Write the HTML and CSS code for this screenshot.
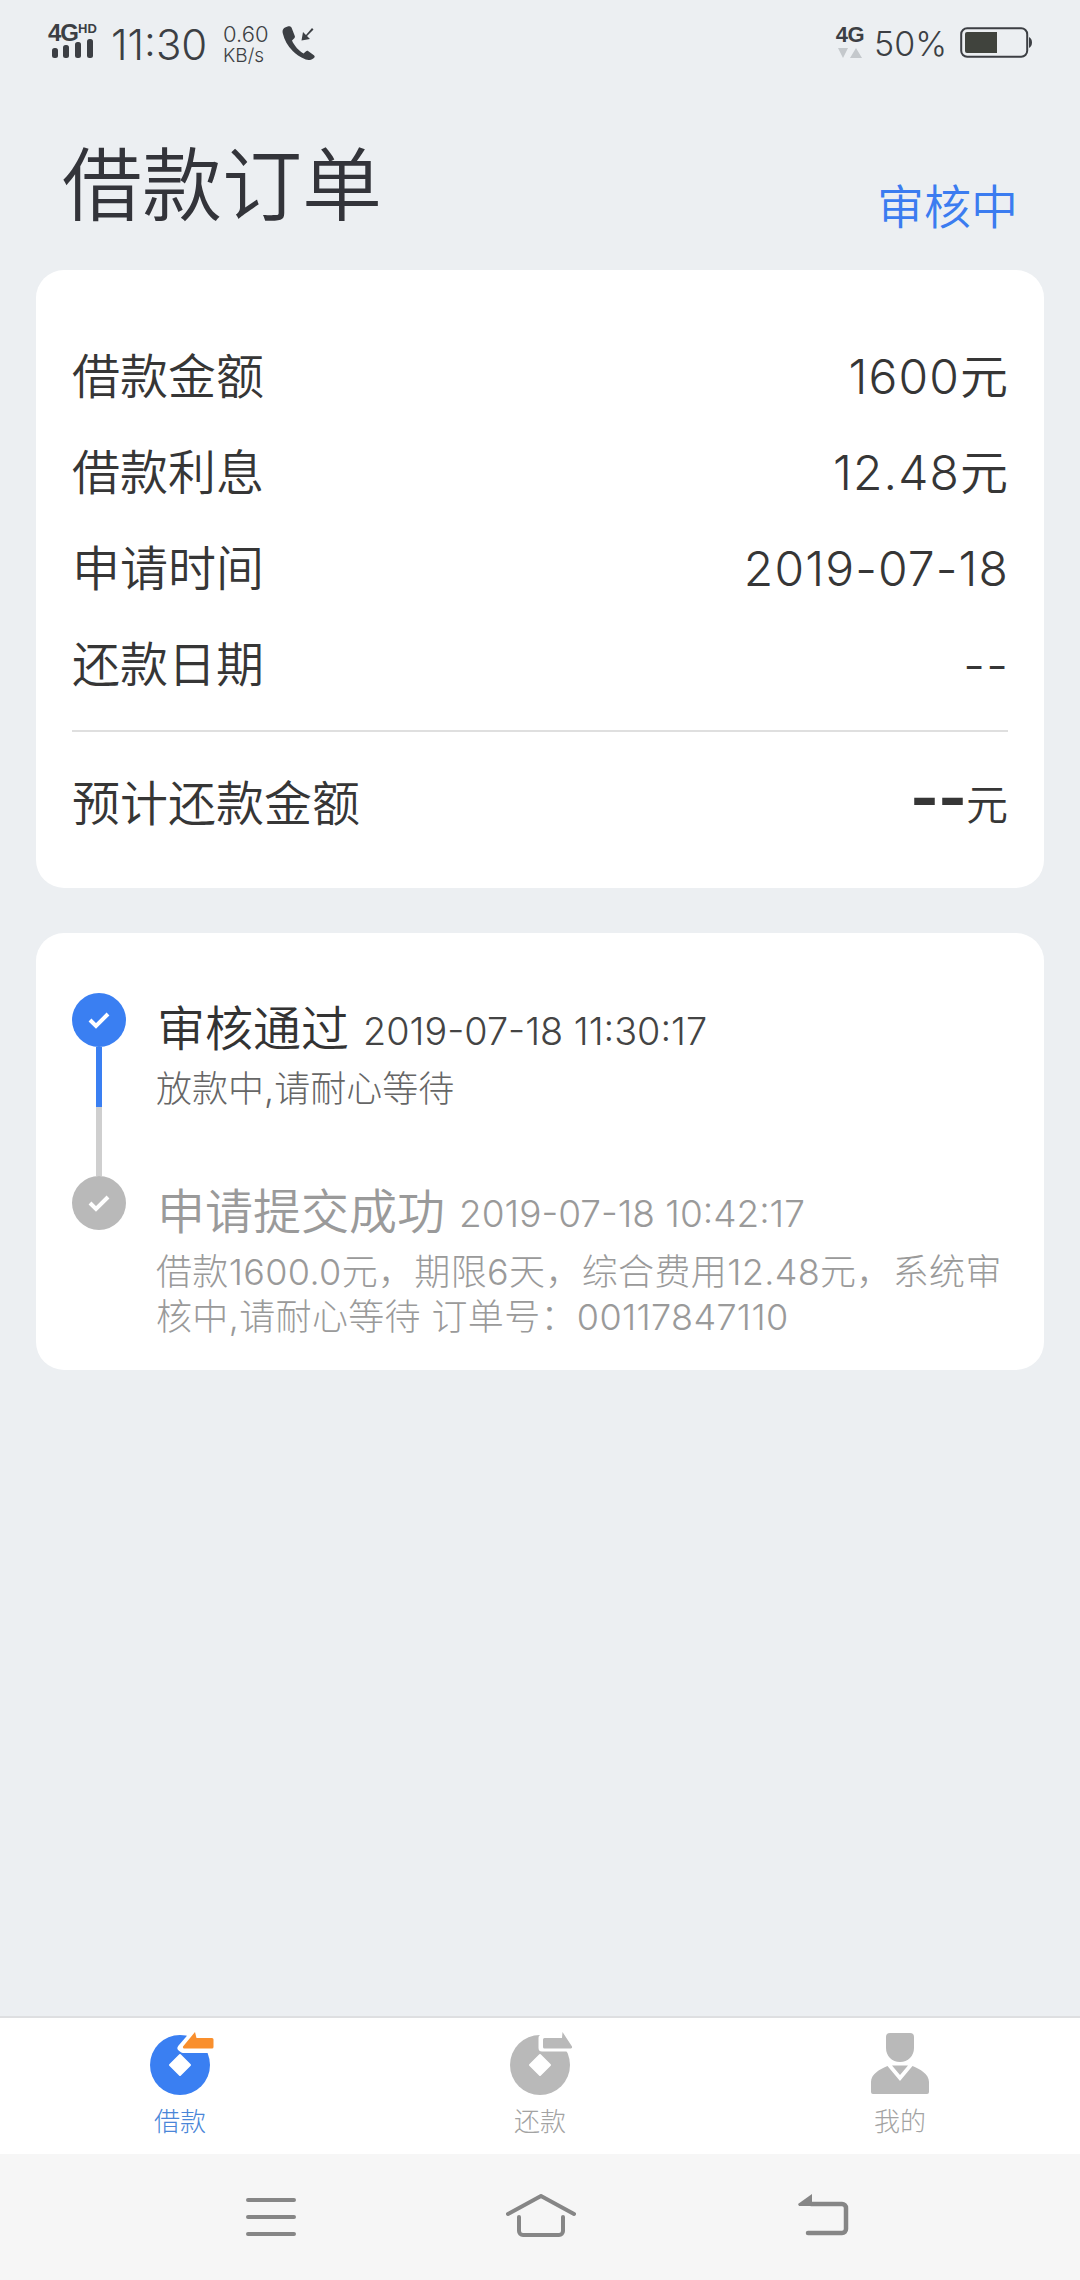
FILE: index.html
```html
<!DOCTYPE html>
<html lang="zh">
<head>
<meta charset="utf-8">
<title>借款订单</title>
<link rel="stylesheet" href="styles.css">
</head>
<body>
<div class="app">
  <div class="status">
    <div class="sig">
      <div class="sig-top"><span class="sig-4g">4G</span><span class="sig-hd">HD</span></div>
      <svg class="sig-bars" width="42" height="20" viewBox="0 0 42 20"><g fill="#3c3f44"><rect x="1" y="9" width="6" height="10" rx="2.5"/><rect x="12" y="6" width="6" height="13" rx="2.5"/><rect x="24" y="3" width="6" height="16" rx="2.5"/><rect x="36" y="0" width="6" height="19" rx="2.5"/></g></svg>
    </div>
    <span class="clock">11:30</span>
    <div class="speed"><span class="speed-num">0.60</span><span class="speed-unit">KB/s</span></div>
    <svg class="phone" width="34" height="34" viewBox="0 0 34 34"><path fill="#3c3f44" d="M3 1.500c-2 1-2.800 3-2.300 5.500 1.500 7 5 13 10 18 3 3 7 6 13 8.500 3 1 6 .5 8.500-1.800.8-.8.6-1.800-.3-2.500l-5.500-4c-.9-.6-1.800-.5-2.600.2l-2.300 2c-4-2-9.500-8-11.500-13l2.300-2.200c.7-.7.8-1.500.4-2.400L9.500 1.500C8.800.4 7.500 0 6.300.2z"/><path fill="#3c3f44" d="M30 2l1.500 1.500-6.500 6.500 3 3-8.500 1.500 1.500-8.500 3 3z"/></svg>
    <div class="status-fill"></div>
    <div class="net">
      <span class="net-4g">4G</span>
      <svg width="24" height="11" viewBox="0 0 24 11"><path fill="#c4c8cc" d="M0 0h10l-5 10zM12 10l6-10 6 10z"/></svg>
    </div>
    <span class="pct">50%</span>
    <svg class="batt" width="72" height="31" viewBox="0 0 72 31"><rect x="1.200" y="1.200" width="66" height="28.600" rx="6" fill="none" stroke="#3c3f44" stroke-width="2"/><path fill="#40433d" d="M5 7a2 2 0 0 1 2-2h30v21H7a2 2 0 0 1-2-2z"/><path fill="#3c3f44" d="M69 10c2 1 3 3 3 5.500s-1 4.500-3 5.500z"/></svg>
  </div>

  <header class="head">
    <h1 class="title">借款订单</h1>
    <span class="state">审核中</span>
  </header>

  <main class="main">
    <section class="card summary">
      <div class="row"><span>借款金额</span><span class="val">1600元</span></div>
      <div class="row"><span>借款利息</span><span class="val">12.48元</span></div>
      <div class="row"><span>申请时间</span><span class="val">2019-07-18</span></div>
      <div class="row"><span>还款日期</span><span class="val">--</span></div>
      <div class="divider"></div>
      <div class="row"><span>预计还款金额</span><span class="val"><b class="dash">--</b><span class="yuan">元</span></span></div>
    </section>

    <section class="card steps">
      <div class="step step-first">
        <div class="marker">
          <span class="dot dot-on"><svg width="24" height="20" viewBox="0 0 24 20"><path d="M3 10l6 6L21 4" fill="none" stroke="#fff" stroke-width="4"/></svg></span>
          <span class="bar bar-on"></span>
          <span class="bar bar-off"></span>
        </div>
        <div class="step-body">
          <div class="step-head"><span class="step-name">审核通过</span><span class="step-time">2019-07-18 11:30:17</span></div>
          <p class="step-desc">放款中,请耐心等待</p>
        </div>
      </div>
      <div class="step step-done">
        <div class="marker">
          <span class="dot dot-off"><svg width="24" height="20" viewBox="0 0 24 20"><path d="M3 10l6 6L21 4" fill="none" stroke="#fff" stroke-width="4"/></svg></span>
        </div>
        <div class="step-body">
          <div class="step-head"><span class="step-name">申请提交成功</span><span class="step-time">2019-07-18 10:42:17</span></div>
          <p class="step-desc">借款1600.0元，期限6天，综合费用12.48元，系统审核中,请耐心等待 订单号：00117847110</p>
        </div>
      </div>
    </section>
  </main>

  <nav class="tabs">
    <div class="tab tab-on">
      <svg class="tab-icon" width="70" height="66" viewBox="0 0 70 66"><circle cx="30" cy="35" r="30" fill="#3a7ff2"/><path d="M30 25l10 10-10 10-10-10z" fill="#fff" stroke="#fff" stroke-width="2" stroke-linejoin="round"/><path d="M31 18L44 3l2 6h17a1.500 1.500 0 0 1 1.500 1.500V18a1.500 1.500 0 0 1-1.500 1.500H33z" fill="#fff" stroke="#fff" stroke-width="7" stroke-linejoin="round"/><path d="M33 16.500L45 2l1.500 6H62a1.500 1.500 0 0 1 1.500 1.500V17a1.500 1.500 0 0 1-1.500 1.500H34.500a1.500 1.500 0 0 1-1.500-2z" fill="#f98f2d"/></svg>
      <span>借款</span>
    </div>
    <div class="tab">
      <svg class="tab-icon" width="70" height="66" viewBox="0 0 70 66"><circle cx="30" cy="35" r="30" fill="#b9b9b9"/><path d="M30 25l10 10-10 10-10-10z" fill="#fff" stroke="#fff" stroke-width="2" stroke-linejoin="round"/><path d="M32 8h20V2l11 16H32z" fill="#fff" stroke="#fff" stroke-width="7" stroke-linejoin="round"/><path d="M34.500 8H52l.5-6L62 16.500a1.500 1.500 0 0 1-1 2H34.500a1.500 1.500 0 0 1-1.500-1.500V9.500A1.500 1.500 0 0 1 34.500 8z" fill="#b9b9b9"/></svg>
      <span>还款</span>
    </div>
    <div class="tab">
      <svg class="tab-icon tab-icon-me" width="70" height="66" viewBox="0 0 70 66"><path fill="#b9b9b9" d="M25 3h20a4 4 0 0 1 4 4v11c0 8-6 14-14 14s-14-6-14-14V7a4 4 0 0 1 4-4zM6 52c0-8 9-13 16.500-16L35 51l12.500-15C55 39 64 44 64 52v10a2 2 0 0 1-2 2H8a2 2 0 0 1-2-2zM27 35.500h16L35 45z"/></svg>
      <span>我的</span>
    </div>
  </nav>

  <div class="sysnav">
    <svg class="nav-menu" width="50" height="38" viewBox="0 0 50 38"><path d="M2 2h46M2 19h46M2 36h46" stroke="#868686" stroke-width="4" stroke-linecap="round" fill="none"/></svg>
    <svg class="nav-home" width="70" height="44" viewBox="0 0 70 44"><path d="M2 20L35 2l33 18M13 23v14a4 4 0 0 0 4 4h36a4 4 0 0 0 4-4V23" stroke="#868686" stroke-width="4" stroke-linecap="round" stroke-linejoin="round" fill="none"/></svg>
    <svg class="nav-back" width="52" height="42" viewBox="0 0 52 42"><path d="M14 10h31a4 4 0 0 1 4 4v21a4 4 0 0 1-4 4H11" stroke="#868686" stroke-width="4.500" stroke-linecap="round" fill="none"/><path d="M1 10L15 0v12H2z" fill="#868686"/></svg>
  </div>
</div>
</body>
</html>
```

FILE: styles.css
```css
* { box-sizing: border-box; }
html, body { margin: 0; padding: 0; }
body {
  font-family: Inter, "Noto Sans CJK SC", sans-serif;
  font-weight: 300;
  color: #333;
  background: #ecEFF2;
}
.app { width: 1080px; height: 2280px; display: flex; flex-direction: column; overflow: hidden; }

.status { height: 88px; display: flex; align-items: flex-start; padding: 23px 48px 0 48px; color: #3c3f44; flex: none; }
.status-fill { flex: 1; }
.sig { width: 52px; display: flex; flex-direction: column; }
.sig-top { display: flex; align-items: flex-start; height: 18px; }
.sig-4g { font: 800 24px/20px "Liberation Sans", sans-serif; letter-spacing: -1px; width: 30px; }
.sig-hd { font: 800 13px/12px "Liberation Sans", sans-serif; }
.sig-bars { display: block; margin: -2px 0 0 3px; }
.clock { font-size: 42px; line-height: 44px; margin: 0 0 0 11px; width: 112px; }
.speed { display: flex; flex-direction: column; width: 59px; }
.speed-num { font-size: 22px; line-height: 23px; }
.speed-unit { font-size: 19px; line-height: 20px; }
.phone { margin-top: 3px; }
.net { display: flex; flex-direction: column; align-items: center; width: 30px; margin-top: 1px; }
.net-4g { font: 800 22px/22px "Liberation Sans", sans-serif; letter-spacing: -.5px; margin-bottom: 2px; }
.pct { font-size: 34px; line-height: 40px; margin: 1px 13px 0 9px; }
.batt { margin-top: 4px; }

.head { height: 182px; padding: 57px 62px 0 62px; display: flex; justify-content: space-between; align-items: flex-start; flex: none; }
.title { margin: 0; font-size: 80px; line-height: 80px; font-weight: 350; color: #33343a; }
.state { margin-top: 38px; font-size: 47px; line-height: 48px; font-weight: 350; color: #3b7cf0; }

.main { flex: 1; padding: 0 36px; }
.card { background: #fff; border-radius: 28px; }
.summary { padding: 58px 36px 37px; }
.row { height: 96px; padding-top: 2px; display: flex; justify-content: space-between; align-items: center; font-size: 48px; line-height: 60px; font-weight: 350; color: #363636; }
.val { letter-spacing: 1.100px; margin-right: -1px; }
.divider { height: 2px; background: #dfdfdf; margin: 18px 0 23px; }
.dash { font-size: 62px; line-height: 40px; font-weight: 700; letter-spacing: -1px; }
.yuan { font-size: 42px; }

.steps { margin-top: 45px; padding: 60px 30px 30px 36px; }
.step { display: flex; gap: 31px; }
.step-first { height: 183px; }
.marker { width: 54px; flex: none; display: flex; flex-direction: column; align-items: center; }
.dot { width: 54px; height: 54px; border-radius: 50%; display: flex; align-items: center; justify-content: center; flex: none; }
.dot-on { background: #3a7ff2; }
.dot-off { background: #b9b9b9; }
.bar { width: 6px; flex: none; }
.bar-on { height: 60px; background: #3a7ff2; }
.bar-off { height: 69px; background: #cfcfcf; }
.step-body { flex: 1; padding-top: 9px; min-width: 0; }
.step-head { display: flex; align-items: center; height: 54px; gap: 14px; }
.step-name { font-size: 48px; line-height: 54px; font-weight: 350; color: #333; }
.step-time { font-size: 37.800px; line-height: 54px; color: #444; padding-top: 4px; }
.step-desc { margin: 11px 0 0 -1px; font-size: 36px; line-height: 45px; color: #666; }
.step-done .step-name, .step-done .step-time, .step-done .step-desc { color: #9a9a9a; }
.step-done .step-time { font-size: 37px; }
.step-done .step-desc { letter-spacing: .35px; }

.tabs { height: 138px; flex: none; background: #fff; border-top: 2px solid #dedfe1; display: grid; grid-template-columns: repeat(3, 360px); }
.tab { display: flex; flex-direction: column; align-items: center; padding-top: 12px; font-size: 26px; line-height: 34px; color: #a3a3a3; }
.tab-icon { display: block; margin: 0 0 9px 10px; }
.tab-icon-me { margin-left: 0; }
.tab-on { color: #4a86d8; }

.sysnav { height: 126px; flex: none; background: #f6f6f6; display: flex; align-items: flex-start; padding: 44px 0 0 246px; }
.nav-home { margin: -4px 0 0 210px; }
.nav-back { margin: -4px 0 0 221px; }
```
